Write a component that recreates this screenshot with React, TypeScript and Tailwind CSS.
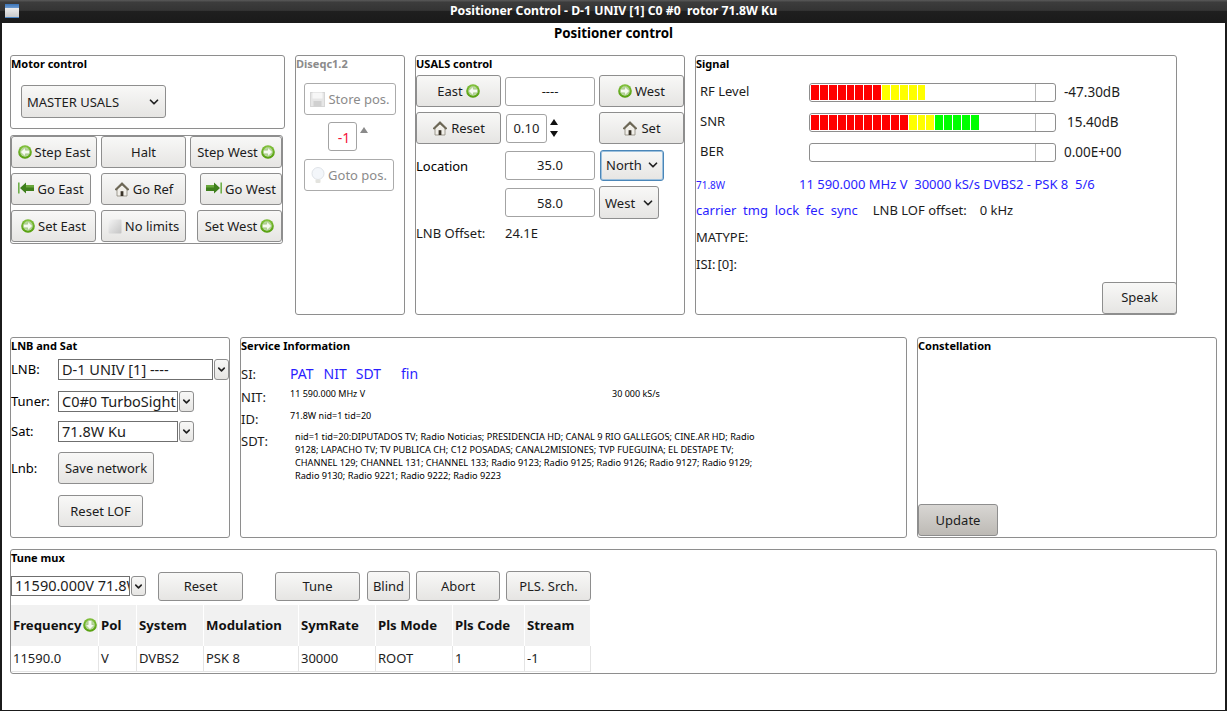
import React, { useId } from 'react';
import { ChevronDown } from 'lucide-react';

const font = { fontFamily: '"Noto Sans", sans-serif' };

const Panel: React.FC<{ title: string; className?: string; disabled?: boolean; children?: React.ReactNode }> = ({
  title,
  className = '',
  disabled,
  children
}) => (
  <section className={`rounded-[3px] border border-[#8e8e8e] flex flex-col ${className}`}>
    <h2 className={`h-[17px] shrink-0 text-[11px] leading-[16px] font-bold ${disabled ? 'text-[#8b8b8b]' : 'text-black'}`}>{title}</h2>
    {children}
  </section>
);

const Btn: React.FC<{ className?: string; disabled?: boolean; tight?: boolean; children?: React.ReactNode }> = ({ className = '', disabled, tight, children }) => (
  <button
    className={`shrink-0 flex items-center justify-center gap-[3px] rounded-[3px] border text-[13px] bg-gradient-to-b ${
      disabled ? 'border-[#ababab] from-white to-white text-[#8b8b8b]' : 'border-[#8e8e8e] from-[#f8f8f7] to-[#e6e5e3] text-[#1c1c1c]'
    } ${tight ? '' : 'pt-[2px]'} ${className}`}
  >
    {children}
  </button>
);

// green round arrow from the gtk icon theme
const RoundArrow: React.FC<{ dir: 'left' | 'right' | 'down'; size?: number }> = ({ dir, size = 14 }) => {
  const id = useId();
  const rot = dir === 'left' ? 180 : dir === 'down' ? 90 : 0;
  return (
    <svg width={size} height={size} viewBox="0 0 16 16" className="shrink-0 -mt-[2px]">
      <defs>
        <radialGradient id={id} cx="50%" cy="35%" r="65%">
          <stop offset="0%" stopColor="#a6dc62" />
          <stop offset="100%" stopColor="#4e9a06" />
        </radialGradient>
      </defs>
      <circle cx="8" cy="8" r="7.8" fill={`url(#${id})`} />
      <circle cx="8" cy="8" r="5.4" fill="#b9d8a0" />
      <path d="M2.8 5.9H7.6V2.6L13.2 8 7.6 13.4V10.1H2.8z" fill="#f6faf1" stroke="#86b35a" strokeWidth="0.5" transform={`rotate(${rot} 8 8)`} />
    </svg>
  );
};

const BarArrow: React.FC<{ flip?: boolean }> = ({ flip }) => (
  <svg width="16" height="12" viewBox="0 0 16 12" className={`shrink-0 -mt-[4px] ${flip ? '-scale-x-100' : ''}`}>
    <rect x="0" y="0.5" width="1.6" height="11" fill="#6fb04a" />
    <path d="M2 6 8 0.5V3H16V9H8V11.5z" fill="#3f7f1c" />
    <path d="M8 3H16V5.5H8z" fill="#6aa83c" />
  </svg>
);

const Home: React.FC = () => (
  <svg width="16" height="16" viewBox="0 0 16 16" className="shrink-0 -mt-[3px]">
    <path d="M3 8V15H13V8L8 3.5z" fill="#f1efe9" stroke="#8a8678" strokeWidth="0.8" />
    <path d="M6.6 15V10.2H9.4V15z" fill="#3a3328" />
    <path d="M1 8.4 8 1.6 15 8.4 13.8 9.2 8 3.8 2.2 9.2z" fill="#6f6957" stroke="#4f4a38" strokeWidth="0.6" />
  </svg>
);

const Floppy: React.FC = () => (
  <svg width="15" height="15" viewBox="0 0 15 15" className="shrink-0 -mt-[2px]">
    <rect x="0.5" y="0.5" width="14" height="14" fill="#e6e6e6" stroke="#d6d6d6" />
    <rect x="2.5" y="0.5" width="10" height="6" fill="#f7f7f7" />
    <rect x="3.5" y="9" width="8" height="5.5" fill="#d0d0d0" />
  </svg>
);

const Bulb: React.FC = () => (
  <svg width="14" height="17" viewBox="0 0 14 17" className="shrink-0 -mt-[2px]">
    <circle cx="7" cy="6.5" r="6" fill="#f3f6fa" stroke="#dfe3e8" />
    <rect x="4.5" y="12.5" width="5" height="3.5" rx="1" fill="#e3e3de" />
  </svg>
);

const Blank: React.FC = () => (
  <svg width="14" height="15" viewBox="0 0 14 15" className="shrink-0 -mt-[2px]">
    <defs>
      <linearGradient id="blank-grad" x1="0" y1="0" x2="1" y2="1">
        <stop offset="0%" stopColor="#f4f4f4" />
        <stop offset="100%" stopColor="#c4c4c4" />
      </linearGradient>
    </defs>
    <rect x="0.5" y="0.5" width="13" height="14" rx="1" fill="url(#blank-grad)" />
  </svg>
);

const Field: React.FC<{ className?: string; red?: boolean; children?: React.ReactNode }> = ({ className = '', red, children }) => (
  <div className={`shrink-0 flex items-center justify-center pt-[2px] rounded-[3px] border border-[#a3a3a3] bg-white ${red ? 'text-[14px] pl-[3px] text-[#f5143c]' : 'text-[13px] text-[#1c1c1c]'} ${className}`}>
    {children}
  </div>
);

const Select: React.FC<{ label: string; focused?: boolean; className?: string }> = ({ label, focused, className = '' }) => (
  <button
    className={`shrink-0 flex items-center justify-between rounded-[3px] border bg-gradient-to-b from-[#f8f8f7] to-[#e6e5e3] text-[13px] text-[#1c1c1c] ${
      focused ? 'border-[#4a86b8] ring-1 ring-inset ring-[#9cc0dd]' : 'border-[#8e8e8e]'
    } ${className}`}
  >
    <span className="pt-[2px]">{label}</span>
    <ChevronDown size={14} strokeWidth={3} className="text-[#222]" />
  </button>
);

const Combo: React.FC<{ label: string; inputClass: string; textClass?: string; btnClass?: string }> = ({
  label,
  inputClass,
  textClass = 'text-[14.5px] pl-[3px]',
  btnClass = 'h-[21px]'
}) => (
  <div className="flex items-start gap-[1px]">
    <div className={`shrink-0 overflow-hidden whitespace-nowrap border border-[#6f6f6f] bg-white text-[#1c1c1c] flex items-center ${textClass} ${inputClass}`}>{label}</div>
    <button className={`shrink-0 w-[15px] flex items-center justify-center rounded-[3px] border border-[#8e8e8e] bg-gradient-to-b from-[#f8f8f7] to-[#e6e5e3] ${btnClass}`}>
      <ChevronDown size={11} strokeWidth={3.5} className="text-[#222]" />
    </button>
  </div>
);

const seg = (red: number, yellow: number, green: number) => [
  ...Array<string>(red).fill('bg-[#ff0000]'),
  ...Array<string>(yellow).fill('bg-[#ffff00]'),
  ...Array<string>(green).fill('bg-[#00ff00]')
];

const Meter: React.FC<{ label: string; value: string; segments: string[]; valueClass?: string }> = ({ label, value, segments, valueClass = 'pl-[8px]' }) => (
  <div className="h-[30px] flex items-center">
    <span className="w-[113px] pl-[4px] text-[13px] text-[#1c1c1c]">{label}</span>
    <div className="w-[247px] h-[19px] rounded-[3px] border border-[#8e8e8e] bg-white flex items-center">
      <div className="w-[225px] pl-[1px] flex items-center gap-[1px]">
        {segments.map((c, i) => (
          <span key={i} className={`w-[7.88px] h-[15px] ${c}`} />
        ))}
      </div>
      <span className="h-full border-l border-[#b8b8b8]" />
    </div>
    <span className={`text-[13.5px] text-[#1c1c1c] ${valueClass}`}>{value}</span>
  </div>
);

const columns = [
  { name: 'Frequency', value: '11590.0', w: 'w-[88px]' },
  { name: 'Pol', value: 'V', w: 'w-[38px]' },
  { name: 'System', value: 'DVBS2', w: 'w-[67px]' },
  { name: 'Modulation', value: 'PSK 8', w: 'w-[95px]' },
  { name: 'SymRate', value: '30000', w: 'w-[77px]' },
  { name: 'Pls Mode', value: 'ROOT', w: 'w-[77px]' },
  { name: 'Pls Code', value: '1', w: 'w-[72px]' },
  { name: 'Stream', value: '-1', w: 'w-[66px]' }
];

const SiRow: React.FC<{ label: string; className?: string; children?: React.ReactNode }> = ({ label, className = '', children }) => (
  <div className={`flex items-start ${className}`}>
    <span className="w-[49px] shrink-0 text-[13px] leading-[18px] text-[#1c1c1c]">{label}</span>
    {children}
  </div>
);

export default function App() {
  return (
    <div style={font} className="w-[1227px] h-[711px] overflow-hidden bg-[#1b1b1b] flex flex-col text-[13px]">
      {/* Title bar */}
      <div className="h-[23px] shrink-0 relative flex items-center justify-center bg-[linear-gradient(#5a5a5a_0%,#3c3c3c_10%,#343434_45%,#1f1f1f_50%,#1a1a1a_100%)]">
        <div className="absolute left-[5px] top-[4px] w-[14px] h-[14px] flex flex-col">
          <span className="h-[4px] bg-gradient-to-b from-[#3a74b8] to-[#6d9bd0]" />
          <span className="flex-1 bg-gradient-to-b from-[#ededed] to-[#c9c9c9] border-b border-[#4c86c5]" />
        </div>
        <span className="text-[12.25px] font-bold text-white whitespace-pre">Positioner Control - D-1 UNIV [1] C0 #0  rotor 71.8W Ku</span>
      </div>

      <main className="flex-1 mx-[2px] mb-[1px] bg-white flex flex-col pl-[8px] pr-[8px]">
        <h1 className="h-[20px] text-center text-[13.33px] leading-[20px] font-bold text-black">Positioner control</h1>

        {/* Top row */}
        <div className="mt-[12px] h-[260px] flex gap-[10px]">
          <div className="w-[275px] flex flex-col">
            <Panel title="Motor control" className="h-[74px]">
              <div className="pl-[10px] pt-[12px]">
                <Select label="MASTER USALS" className="w-[145px] h-[33px] pl-[5px] pr-[4px]" />
              </div>
            </Panel>
            <div className="mt-[6px] w-[273px] h-[109px] rounded-[3px] border border-[#8e8e8e] flex flex-col gap-[5px]">
              <div className="flex">
                <Btn className="w-[86px] h-[32px]"><RoundArrow dir="left" />Step East</Btn>
                <Btn className="ml-[4px] w-[85px] h-[32px]">Halt</Btn>
                <Btn className="ml-auto w-[92px] h-[32px]">Step West<RoundArrow dir="right" /></Btn>
              </div>
              <div className="flex">
                <Btn className="w-[80px] h-[32px]"><BarArrow />Go East</Btn>
                <Btn className="ml-[10px] w-[85px] h-[32px]"><Home />Go Ref</Btn>
                <Btn className="ml-auto w-[82px] h-[32px]"><BarArrow flip />Go West</Btn>
              </div>
              <div className="flex">
                <Btn className="w-[85px] h-[32px]"><RoundArrow dir="right" />Set East</Btn>
                <Btn className="ml-[5px] w-[85px] h-[32px]"><Blank />No limits</Btn>
                <Btn className="ml-auto w-[85px] h-[32px]">Set West<RoundArrow dir="right" /></Btn>
              </div>
            </div>
          </div>

          <Panel title="Diseqc1.2" disabled className="w-[110px]">
            <div className="pl-[8px] pt-[10px] flex flex-col">
              <Btn disabled className="w-[92px] h-[32px]"><Floppy />Store pos.</Btn>
              <div className="mt-[7px] pl-[24px] flex gap-[3px]">
                <Field red className="w-[29px] h-[29px]">-1</Field>
                <span className="mt-[5px] w-0 h-0 border-x-[4.5px] border-x-transparent border-b-[6px] border-b-[#8a8a8a]" />
              </div>
              <Btn disabled className="mt-[8px] w-[90px] h-[32px]"><Bulb />Goto pos.</Btn>
            </div>
          </Panel>

          <Panel title="USALS control" className="w-[270px]">
            <div className="flex flex-col">
              <div className="mt-[2px] flex items-center">
                <Btn className="w-[85px] h-[32px]">East<RoundArrow dir="left" /></Btn>
                <Field className="ml-[4px] w-[90px] h-[29px]">----</Field>
                <Btn className="ml-[4px] w-[85px] h-[32px]"><RoundArrow dir="right" />West</Btn>
              </div>
              <div className="mt-[5px] flex items-center">
                <Btn className="w-[85px] h-[32px]"><Home />Reset</Btn>
                <Field className="ml-[5px] w-[41px] h-[29px]">0.10</Field>
                <div className="ml-[3px] w-[10px] flex flex-col gap-[6px]">
                  <span className="w-0 h-0 border-x-[4.5px] border-x-transparent border-b-[6px] border-b-[#111]" />
                  <span className="w-0 h-0 border-x-[4.5px] border-x-transparent border-t-[6px] border-t-[#111]" />
                </div>
                <Btn className="ml-[41px] w-[85px] h-[32px]"><Home />Set</Btn>
              </div>
              <div className="mt-[5px] flex items-center h-[32px]">
                <span className="w-[89px] shrink-0 pt-[3px]">Location</span>
                <Field className="w-[90px] h-[29px]">35.0</Field>
                <Select label="North" focused className="ml-[5px] w-[64px] h-[31px] pl-[5px] pr-[3px]" />
              </div>
              <div className="mt-[5px] flex items-center h-[33px]">
                <Field className="ml-[89px] w-[90px] h-[29px]">58.0</Field>
                <Select label="West" className="ml-[4px] w-[60px] h-[33px] pl-[5px] pr-[3px]" />
              </div>
              <div className="mt-[5px] flex items-center h-[20px] text-[#1c1c1c]">
                <span className="w-[89px] shrink-0">LNB Offset:</span>
                <span>24.1E</span>
              </div>
            </div>
          </Panel>

          <Panel title="Signal" className="w-[482px] relative">
            <div className="mt-[4px] flex flex-col">
              <Meter label="RF Level" value="-47.30dB" segments={seg(8, 5, 0)} />
              <Meter label="SNR" value="15.40dB" segments={seg(11, 3, 5)} valueClass="pl-[11px]" />
              <Meter label="BER" value="0.00E+00" segments={[]} />
            </div>
            <div className="mt-[8px] h-[20px] flex items-center text-[#2a1eff]">
              <span className="w-[103px] text-[10px] leading-[16px]">71.8W</span>
              <span className="whitespace-pre">11 590.000 MHz V  30000 kS/s DVBS2 - PSK 8  5/6</span>
            </div>
            <div className="mt-[6px] h-[20px] flex items-center whitespace-pre">
              <span className="text-[#2a1eff]">carrier  tmg  lock  fec  sync</span>
              <span className="ml-[15px] text-[#1c1c1c]">LNB LOF offset:</span>
              <span className="ml-[13px] text-[#1c1c1c]">0 kHz</span>
            </div>
            <div className="mt-[6px] h-[20px] leading-[20px] text-[#1c1c1c]">MATYPE:</div>
            <div className="mt-[7px] h-[20px] leading-[20px] text-[#1c1c1c]">ISI:<span className="ml-[2px]">[0]:</span></div>
            <Btn tight className="absolute -right-px bottom-0 w-[75px] h-[32px]">Speak</Btn>
          </Panel>
        </div>

        {/* Middle row */}
        <div className="mt-[22px] h-[201px] flex gap-[10px]">
          <Panel title="LNB and Sat" className="w-[220px]">
            <div className="mt-[4px] flex items-start h-[32px]">
              <span className="w-[47px] shrink-0 leading-[21px]">LNB:</span>
              <Combo label="D-1 UNIV [1] ----" inputClass="w-[155px] h-[21px]" />
            </div>
            <div className="flex items-start h-[30px]">
              <span className="w-[47px] shrink-0 leading-[21px]">Tuner:</span>
              <Combo label="C0#0 TurboSight" inputClass="w-[120px] h-[21px]" />
            </div>
            <div className="flex items-start h-[31px]">
              <span className="w-[47px] shrink-0 leading-[21px]">Sat:</span>
              <Combo label="71.8W Ku" inputClass="w-[120px] h-[21px]" />
            </div>
            <div className="flex items-center h-[32px]">
              <span className="w-[47px] shrink-0 pt-[2px]">Lnb:</span>
              <Btn className="w-[96px] h-[32px]">Save network</Btn>
            </div>
            <Btn className="mt-[11px] ml-[47px] w-[85px] h-[32px]">Reset LOF</Btn>
          </Panel>

          <Panel title="Service Information" className="w-[667px]">
            <SiRow label="SI:" className="mt-[10px] h-[23px]">
              <span className="text-[14px] text-[#2a1eff] whitespace-pre leading-[18px]">
                PAT<span className="ml-[10px]">NIT</span><span className="ml-[9px]">SDT</span><span className="ml-[20px]">fin</span>
              </span>
            </SiRow>
            <SiRow label="NIT:" className="h-[22px]">
              <span className="w-[322px] text-[9px] leading-[12px]">11 590.000 MHz V</span>
              <span className="text-[9px] leading-[12px]">30 000 kS/s</span>
            </SiRow>
            <SiRow label="ID:" className="h-[22px]">
              <span className="text-[9px] leading-[12px]">71.8W nid=1 tid=20</span>
            </SiRow>
            <SiRow label="SDT:">
              <p className="-mt-[2px] pl-[5px] text-[9.2px] leading-[13px] whitespace-nowrap">
                nid=1 tid=20:DIPUTADOS TV; Radio Noticias; PRESIDENCIA HD; CANAL 9 RIO GALLEGOS; CINE.AR HD; Radio<br />
                9128; LAPACHO TV; TV PUBLICA CH; C12 POSADAS; CANAL2MISIONES; TVP FUEGUINA; EL DESTAPE TV;<br />
                CHANNEL 129; CHANNEL 131; CHANNEL 133; Radio 9123; Radio 9125; Radio 9126; Radio 9127; Radio 9129;<br />
                Radio 9130; Radio 9221; Radio 9222; Radio 9223
              </p>
            </SiRow>
          </Panel>

          <Panel title="Constellation" className="w-[300px] justify-between">
            <button className="mb-[1px] pt-[2px] w-[80px] h-[32px] rounded-[3px] border border-[#8e8e8e] bg-gradient-to-b from-[#d8d6d3] to-[#bdbab5] text-[13px] text-[#1c1c1c]">Update</button>
          </Panel>
        </div>

        {/* Tune mux */}
        <Panel title="Tune mux" className="mt-[11px] h-[125px]">
          <div className="mt-[4px] flex items-start">
            <div className="mt-[5px]">
              <Combo label="11590.000V 71.8W" inputClass="w-[119px] h-[20px]" textClass="text-[14.5px] pl-[3px]" btnClass="h-[20px]" />
            </div>
            <Btn tight className="ml-[12px] mt-[1px] w-[85px] h-[29px]">Reset</Btn>
            <Btn tight className="ml-[32px] mt-[1px] w-[85px] h-[29px]">Tune</Btn>
            <Btn className="ml-[7px] w-[43px] h-[30px]">Blind</Btn>
            <Btn className="ml-[6px] w-[84px] h-[30px]">Abort</Btn>
            <Btn className="ml-[6px] w-[85px] h-[30px]">PLS. Srch.</Btn>
          </div>
          <div className="mt-[4px] w-[580px] flex flex-col">
            <div className="flex h-[41px] bg-[#f1f1f1]">
              {columns.map((c, i) => (
                <div key={c.name} className={`${c.w} flex items-center gap-[2px] pl-[2px] border-r border-white text-[13.2px] font-bold text-[#111]`}>
                  {c.name}
                  {i === 0 && <RoundArrow dir="down" />}
                </div>
              ))}
            </div>
            <div className="flex h-[26px] border-b border-[#e4e4e4]">
              {columns.map(c => (
                <div key={c.name} className={`${c.w} flex items-center pl-[2px] border-r border-[#e4e4e4] text-[13px] text-[#1c1c1c]`}>{c.value}</div>
              ))}
            </div>
          </div>
        </Panel>
      </main>
    </div>
  );
}
